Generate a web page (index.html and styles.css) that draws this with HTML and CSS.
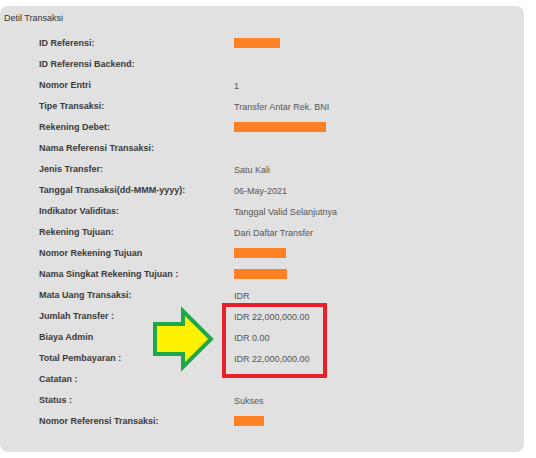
FILE: index.html
```html
<!DOCTYPE html>
<html>
<head>
<meta charset="utf-8">
<link rel="stylesheet" href="styles.css">
</head>
<body>
<div class="panel">
  <div class="title">Detil Transaksi</div>
  <div class="grid">
    <div class="lbl">ID Referensi:</div><div class="val"><span class="mask" style="width:46px"></span></div>
    <div class="lbl">ID Referensi Backend:</div><div class="val"></div>
    <div class="lbl">Nomor Entri</div><div class="val">1</div>
    <div class="lbl">Tipe Transaksi:</div><div class="val">Transfer Antar Rek. BNI</div>
    <div class="lbl">Rekening Debet:</div><div class="val"><span class="mask" style="width:92px"></span></div>
    <div class="lbl">Nama Referensi Transaksi:</div><div class="val"></div>
    <div class="lbl">Jenis Transfer:</div><div class="val">Satu Kali</div>
    <div class="lbl">Tanggal Transaksi(dd-MMM-yyyy):</div><div class="val">06-May-2021</div>
    <div class="lbl">Indikator Validitas:</div><div class="val">Tanggal Valid Selanjutnya</div>
    <div class="lbl">Rekening Tujuan:</div><div class="val">Dari Daftar Transfer</div>
    <div class="lbl">Nomor Rekening Tujuan</div><div class="val"><span class="mask" style="width:52px"></span></div>
    <div class="lbl">Nama Singkat Rekening Tujuan :</div><div class="val"><span class="mask" style="width:53px"></span></div>
    <div class="lbl">Mata Uang Transaksi:</div><div class="val">IDR</div>
    <div class="lbl">Jumlah Transfer :</div><div class="val">IDR 22,000,000.00</div>
    <div class="lbl">Biaya Admin</div><div class="val">IDR 0.00</div>
    <div class="lbl">Total Pembayaran :</div><div class="val">IDR 22,000,000.00</div>
    <div class="lbl">Catatan :</div><div class="val"></div>
    <div class="lbl">Status :</div><div class="val">Sukses</div>
    <div class="lbl">Nomor Referensi Transaksi:</div><div class="val"><span class="mask" style="width:30px"></span></div>
  </div>
  <div class="redbox"></div>
  <svg class="arrow" width="68" height="68" viewBox="150 305 68 68">
    <polygon points="155,324 183,324 183,311 211,339 183,367 183,354 155,354" fill="#fff200" stroke="#1fa84a" stroke-width="4" stroke-linejoin="miter"/>
  </svg>
</div>
</body>
</html>
```

FILE: styles.css
```css
html, body {
  margin: 0;
  padding: 0;
  background: #ffffff;
}
body {
  font-family: "Liberation Sans", Arial, sans-serif;
  font-size: 9px;
}
.panel {
  position: relative;
  margin-top: 6px;
  width: 524px;
  height: 446px;
  box-sizing: border-box;
  background: #e1e1e1;
  border-radius: 8px;
  padding-top: 2px;
}
.title {
  height: 21px;
  line-height: 21px;
  padding-left: 4px;
  color: #333;
  font-size: 9px;
}
.grid {
  margin-top: 3px;
  display: grid;
  grid-template-columns: 195px 1fr;
  grid-auto-rows: 21px;
  padding-left: 39px;
}
.lbl {
  display: flex;
  align-items: center;
  color: #3a3a3a;
  font-weight: bold;
}
.val {
  display: flex;
  align-items: center;
  padding-top: 2px;
  color: #555;
}
.mask {
  display: block;
  height: 10px;
  margin-top: -2px;
  background: #ff8126;
}
.redbox {
  position: absolute;
  left: 222px;
  top: 297px;
  width: 105px;
  height: 75px;
  box-sizing: border-box;
  border: 4px solid #e8202a;
}
.arrow {
  position: absolute;
  left: 150px;
  top: 299px;
}
```
